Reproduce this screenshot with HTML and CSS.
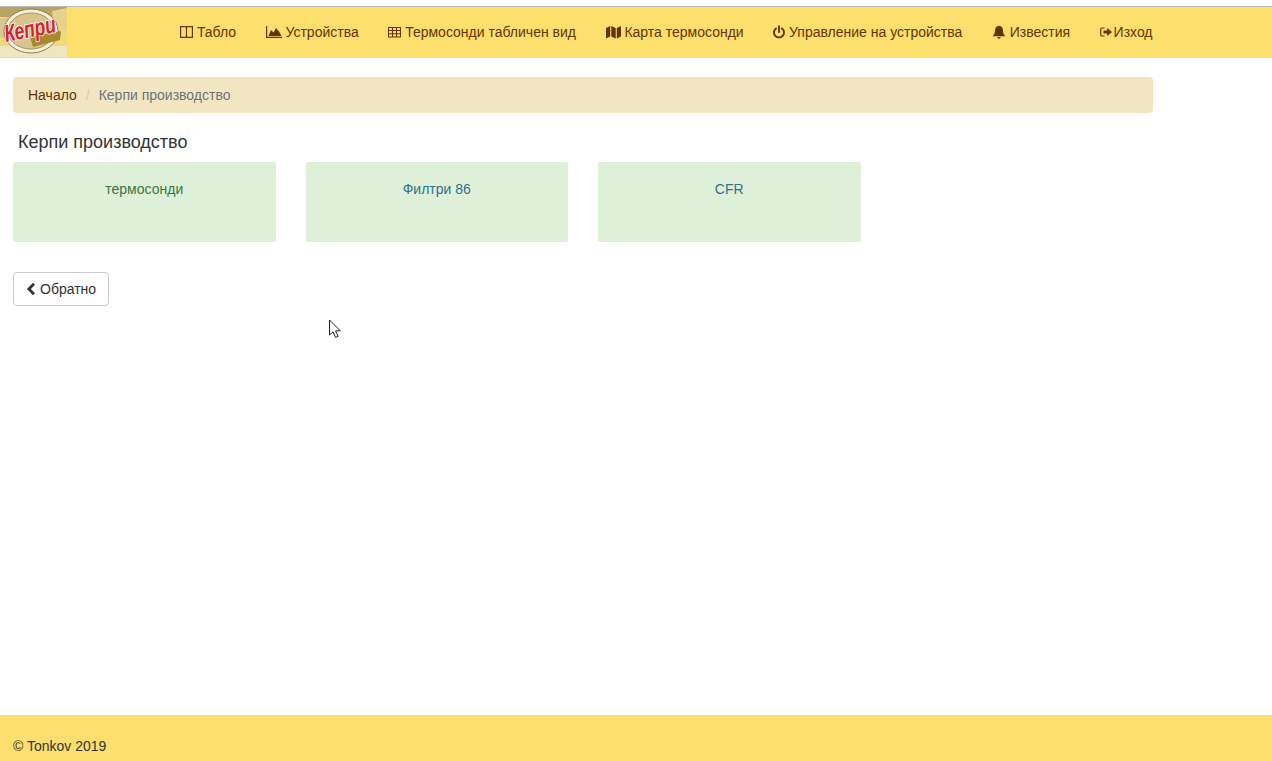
FILE: index.html
```html
<!DOCTYPE html>
<html lang="en">
<head>
  <meta charset="UTF-8">
  <title>Керпи производство</title>
  <link rel="stylesheet" href="styles.css">
</head>
<body>
  <nav class="navbar">
    <a class="brand" href="#">
      <svg width="67" height="50" viewBox="0 0 67 50">
        <rect width="67" height="50" fill="#f3d97e"/>
        <rect width="67" height="10" fill="#b8a460"/>
        <rect y="39" width="67" height="11" fill="#efe5bf"/>
        <path d="M0 12 L12 9 L12 33 L0 30Z" fill="#d9c88a"/>
        <path d="M52 4 L67 1 L67 22 L54 26Z" fill="#e6d28c"/>
        <ellipse cx="31" cy="24" rx="27" ry="22" fill="#f5efdc" stroke="#8f7d4c" stroke-width="1"/>
        <ellipse cx="31" cy="24" rx="23" ry="18" fill="#d8c58c" stroke="#a8945c" stroke-width="1"/>
        <path d="M30 30 L61 24 L60 33 L33 40Z" fill="#a88a2c"/>
        <text class="logo-text" x="6" y="35" textLength="52" lengthAdjust="spacingAndGlyphs" transform="rotate(-11 6 35)">Кепри</text>
      </svg>
    </a>
    <ul class="nav-list">
      <li><a href="#">
        <svg class="icon w13" viewBox="0 0 13 14"><path d="M0.600 1.600h11.800v10.800H0.600z M6.500 1.600v10.800" fill="none" stroke="#663300" stroke-width="1.200"/></svg>
        Табло</a></li>
      <li><a href="#">
        <svg class="icon w16" viewBox="0 0 16 14"><path d="M0.600 1v11.400H16" fill="none" stroke="#663300" stroke-width="1.200"/><path d="M2.500 11L5 5l2.500 2.500L10 3l3 3.500 2.500 4.500z" fill="#663300"/></svg>
        Устройства</a></li>
      <li><a href="#">
        <svg class="icon w13" viewBox="0 0 13 14"><path d="M0.500 2.500h12v9.500H0.500z M0.500 5.500h12 M0.500 8.700h12 M4.500 2.500V12 M8.500 2.500V12" fill="none" stroke="#663300" stroke-width="1.100"/></svg>
        Термосонди табличен вид</a></li>
      <li><a href="#">
        <svg class="icon w15" viewBox="0 0 15 14"><path d="M0 3L4.200 1v10.500L0 13.500z M5.300 1l4.400 2v10.500l-4.400-2z M10.800 3L15 1v10.500l-4.200 2z" fill="#663300"/></svg>
        Карта термосонди</a></li>
      <li><a href="#">
        <svg class="icon w12" viewBox="0 0 12 14"><path d="M3 3.400a5 5 0 1 0 6 0" fill="none" stroke="#663300" stroke-width="1.900" stroke-linecap="round"/><path d="M6 1.200v5.800" stroke="#663300" stroke-width="1.900" stroke-linecap="round"/></svg>
        Управление на устройства</a></li>
      <li><a href="#">
        <svg class="icon w14" viewBox="0 0 14 14"><path d="M7 0.800C4.300 0.800 3 3 3 5.500c0 3-1.200 4.300-2.500 5.700h13c-1.300-1.400-2.500-2.700-2.500-5.700C11 3 9.700 0.800 7 0.800z M5.300 12a1.700 1.700 0 0 0 3.400 0z" fill="#663300"/></svg>
        Известия</a></li>
      <li><a href="#" class="tight">
        <svg class="icon w12" viewBox="0 0 12 14"><path d="M4.500 3H2Q0.700 3 0.700 4.300v5.400Q0.700 11 2 11h2.500" fill="none" stroke="#663300" stroke-width="1.200"/><path d="M3.500 5.500h3.700V3L12 7l-4.800 4V8.500H3.500z" fill="#663300"/></svg>Изход</a></li>
    </ul>
  </nav>

  <main class="content">
    <ol class="breadcrumb">
      <li><a href="#">Начало</a></li>
      <li class="active">Керпи производство</li>
    </ol>

    <h4 class="page-title">Керпи производство</h4>

    <div class="cards">
      <a class="card" href="#">термосонди</a>
      <a class="card card-teal" href="#">Филтри 86</a>
      <a class="card card-teal" href="#">CFR</a>
    </div>

    <a class="btn" href="#">
      <svg class="chevron" viewBox="0 0 10 14"><path d="M8 1.800L2.900 7 8 12.200" fill="none" stroke="#333" stroke-width="2.800"/></svg>
      Обратно</a>
  </main>

  <!-- mouse pointer caught in the screenshot -->
  <svg class="pointer" width="14" height="20" viewBox="0 0 14 20"><path d="M1.500 1v15l3.500-3.200L7.500 18.500l2.600-1.200-2.500-5.500h4.700z" fill="#fff" stroke="#222" stroke-width="1"/></svg>

  <footer class="footer">© Tonkov 2019</footer>
</body>
</html>
```

FILE: styles.css
```css
html, body {
  height: 100%;
}
body {
  font-family: "Liberation Sans", Arial, sans-serif;
  font-size: 14px;
  line-height: 20px;
  margin: 0;
  color: #333;
  display: flex;
  flex-direction: column;
  height: 761px;
  overflow: hidden;
  position: relative;
  background-color: #fff;
}
a {
  text-decoration: none;
}
.navbar {
  margin-top: 6px;
  border-top: 1px solid #bdbdbd;
  height: 52px;
  background-color: #fcdf6d;
  display: flex;
  box-sizing: border-box;
}
.brand {
  width: 67px;
  height: 50px;
  display: block;
}
.logo-text {
  font-family: "Liberation Sans", sans-serif;
  font-size: 24px;
  font-weight: bold;
  font-style: italic;
  fill: #d4232b;
  stroke: #fff;
  stroke-width: 1.600px;
  paint-order: stroke;
}
.nav-list {
  list-style: none;
  margin: 0;
  padding: 0 0 0 113px;
  display: flex;
  gap: 29.500px;
  height: 50px;
  align-items: center;
}
.nav-list a {
  color: #663300;
  display: flex;
  align-items: center;
  gap: 3.900px;
}
.nav-list a.tight {
  gap: 2px;
}
.icon {
  height: 14px;
  flex: none;
}
.w12 { width: 12px; }
.w13 { width: 13px; }
.w14 { width: 14px; }
.w15 { width: 15px; }
.w16 { width: 16px; }
.content {
  flex: 1;
  padding: 19px 0 0 13px;
  width: 1140px;
}
.breadcrumb {
  list-style: none;
  margin: 0;
  padding: 8px 15px;
  background-color: #f1e6c1;
  border-radius: 4px;
  display: flex;
}
.breadcrumb a {
  color: #663300;
}
.breadcrumb .active {
  color: #6c757d;
}
.breadcrumb .active::before {
  content: "/";
  color: #ccc;
  padding: 0 9px;
}
.page-title {
  font-size: 18px;
  font-weight: normal;
  line-height: 20px;
  margin: 19px 0 10px 5px;
  color: #333;
}
.cards {
  display: flex;
  gap: 30px;
}
.card {
  width: 262.500px;
  height: 80px;
  box-sizing: border-box;
  padding-top: 17px;
  text-align: center;
  background-color: #dff0d8;
  color: #3c763d;
  border-radius: 2px;
}
.card-teal {
  color: #31708f;
}
.btn {
  display: inline-flex;
  align-items: center;
  gap: 4px;
  margin-top: 30px;
  height: 34px;
  box-sizing: border-box;
  padding: 0 12px;
  border: 1px solid #ccc;
  border-radius: 4px;
  color: #333;
  background-color: #fff;
}
.chevron {
  width: 10px;
  height: 14px;
}
.pointer {
  position: absolute;
  left: 328px;
  top: 319px;
}
.footer {
  height: 46px;
  box-sizing: border-box;
  padding: 21px 0 0 13px;
  background-color: #fcdf6d;
  color: #333;
}
```
